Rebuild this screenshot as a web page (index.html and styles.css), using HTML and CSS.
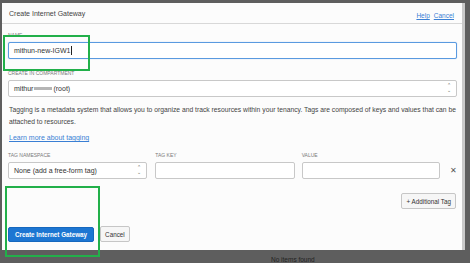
FILE: index.html
```html
<!DOCTYPE html>
<html lang="en">
<head>
  <meta charset="UTF-8">
  <title>Create Internet Gateway</title>
  <link rel="stylesheet" href="styles.css">
</head>
<body>
  <div class="panel">
    <div class="dialog">
      <div class="head">
        <span class="title">Create Internet Gateway</span>
        <span class="links"><a href="#">Help</a><a href="#">Cancel</a></span>
      </div>
      <div class="body">
        <div class="field name-field">
          <label>NAME</label>
          <div class="input focus">mithun-new-IGW1<span class="caret"></span></div>
          <div class="mark mark-name"></div>
        </div>
        <div class="field">
          <label>CREATE IN COMPARTMENT</label>
          <div class="input select">mithur<span class="redact"></span>(root)<span class="arrows">&#8963;<br>&#8964;</span></div>
        </div>
        <p class="info">Tagging is a metadata system that allows you to organize and track resources within your tenancy. Tags are composed of keys and values that can be attached to resources.</p>
        <a class="learn" href="#">Learn more about tagging</a>
        <div class="tags">
          <div class="field tag-ns">
            <label>TAG NAMESPACE</label>
            <div class="input select">None (add a free-form tag)<span class="arrows">&#8963;<br>&#8964;</span></div>
          </div>
          <div class="field tag-key">
            <label>TAG KEY</label>
            <div class="input"></div>
          </div>
          <div class="field tag-value">
            <label>VALUE</label>
            <div class="input"></div>
          </div>
          <span class="remove">&#x2715;</span>
        </div>
        <div class="add-row"><button class="btn">+ Additional Tag</button></div>
      </div>
      <div class="foot">
        <button class="btn primary">Create Internet Gateway</button>
        <button class="btn">Cancel</button>
        <div class="mark mark-btn"></div>
      </div>
    </div>
    <div class="edge"></div>
  </div>
  <div class="below">No items found</div>
</body>
</html>
```

FILE: styles.css
```css
* {
  margin: 0;
  padding: 0;
  box-sizing: border-box;
}
body {
  width: 470px;
  height: 263px;
  overflow: hidden;
  background-color: #5e5e5e;
  font-family: "Liberation Sans", Arial, sans-serif;
  color: #333;
}
.panel {
  display: flex;
  padding-top: 3px;
  padding-left: 2px;
  height: 250px;
}
.dialog {
  width: 460px;
  background-color: #fcfcfc;
  display: flex;
  flex-direction: column;
  position: relative;
}
.edge {
  width: 3px;
  background-color: #c9c9c9;
}
.head {
  height: 21px;
  border-bottom: 1px solid #d8d8d8;
  display: flex;
  align-items: center;
  justify-content: space-between;
  padding: 0 8px 0 7px;
}
.title {
  font-size: 7px;
  color: #444;
}
.links a {
  font-size: 6.5px;
  color: #3a7fd4;
  margin-left: 4px;
}
.body {
  padding: 7px 5px 0 6px;
  flex: 1;
}
.field {
  position: relative;
  display: flex;
  flex-direction: column;
}
label {
  font-size: 5px;
  color: #7a7a7a;
  height: 11px;
  padding-top: 1px;
}
.input {
  height: 17px;
  border: 1px solid #c8c8c8;
  border-radius: 2px;
  background-color: #fff;
  font-size: 7px;
  color: #333;
  display: flex;
  align-items: center;
  padding-left: 5px;
  position: relative;
}
.focus {
  border-color: #5a9ae0;
  box-shadow: 0 0 1px #8ab8ee;
}
.caret {
  width: 1px;
  height: 9px;
  background-color: #222;
  margin-left: 1px;
}
.name-field {
  margin-bottom: 10px;
}
.select .arrows {
  position: absolute;
  right: 5px;
  top: 2px;
  font-size: 5px;
  line-height: 5px;
  color: #666;
}
.redact {
  width: 18px;
  height: 3px;
  background-color: #b5b5b5;
  margin: 0 1px;
}
.info {
  font-size: 6.75px;
  line-height: 12px;
  color: #444;
  margin-top: 7px;
  padding-left: 1px;
}
.learn {
  display: block;
  font-size: 7px;
  color: #3a7fd4;
  margin-top: 6px;
  padding-left: 1px;
}
.tags {
  display: flex;
  align-items: flex-end;
  margin-top: 10px;
}
.tag-ns {
  width: 140px;
}
.tag-key {
  width: 140px;
  margin-left: 8px;
}
.tag-value {
  width: 139px;
  margin-left: 7px;
}
.remove {
  font-size: 8px;
  color: #555;
  height: 16px;
  line-height: 16px;
  margin-left: 10px;
}
.add-row {
  display: flex;
  justify-content: flex-end;
  margin-top: 14px;
  padding-right: 1px;
}
.btn {
  font-family: "Liberation Sans", Arial, sans-serif;
  font-size: 6.3px;
  color: #333;
  background-color: #f6f6f6;
  border: 1px solid #c6c6c6;
  border-radius: 2px;
  height: 16px;
  padding: 0 4px;
}
.foot {
  display: flex;
  gap: 6px;
  padding: 0 0 8px 6px;
  align-items: center;
  position: relative;
}
.primary {
  background-color: #1d76d2;
  border-color: #1668be;
  color: #fff;
  font-weight: bold;
  padding: 0 6px;
  height: 15px;
}
.mark {
  position: absolute;
  border: 2px solid #22b04a;
}
.mark-name {
  left: -5px;
  top: 4px;
  width: 87px;
  height: 36px;
}
.mark-btn {
  left: 3px;
  top: -40px;
  width: 95px;
  height: 71px;
}
.below {
  font-size: 6.5px;
  color: #222;
  padding-left: 271px;
  padding-top: 6px;
}
```
